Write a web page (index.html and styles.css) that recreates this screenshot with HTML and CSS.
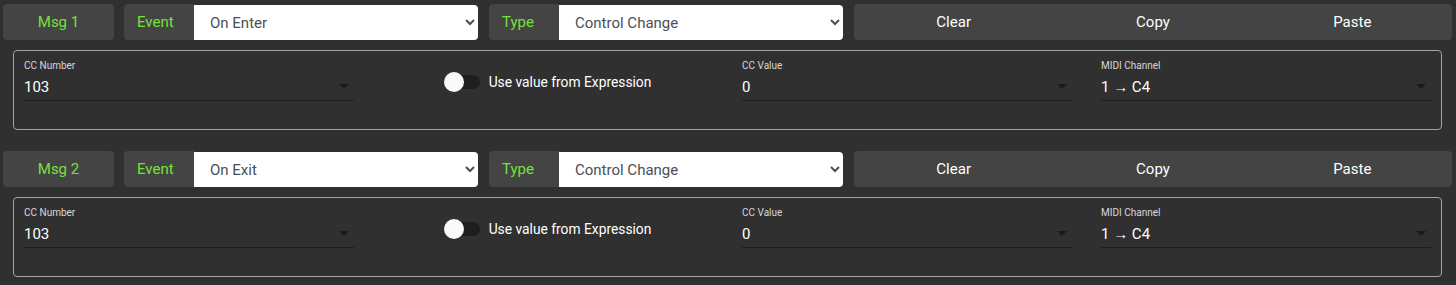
FILE: index.html
```html
<!DOCTYPE html>
<html lang="en">
<head>
    <meta charset="UTF-8">
    <meta name="viewport" content="width=device-width, initial-scale=1.0">
    <title>MIDI Messages</title>
    <link rel="stylesheet" href="styles.css">
</head>
<body>
    <div class="messages">
        <div class="msg-block">
            <div class="toolbar">
                <div class="msg-name">Msg 1</div>
                <div class="input-group">
                    <span class="group-label">Event</span>
                    <select class="group-select">
                        <option>On Enter</option>
                        <option>On Exit</option>
                    </select>
                </div>
                <div class="input-group">
                    <span class="group-label">Type</span>
                    <select class="group-select">
                        <option>Control Change</option>
                        <option>Program Change</option>
                    </select>
                </div>
                <div class="actions">
                    <button>Clear</button>
                    <button>Copy</button>
                    <button>Paste</button>
                </div>
            </div>
            <div class="panel">
                <div class="field">
                    <label>CC Number</label>
                    <div class="field-value">103 <span class="caret"></span></div>
                </div>
                <div class="switch-field">
                    <span class="switch"><span class="knob"></span></span>
                    <span>Use value from Expression</span>
                </div>
                <div class="field">
                    <label>CC Value</label>
                    <div class="field-value">0 <span class="caret"></span></div>
                </div>
                <div class="field">
                    <label>MIDI Channel</label>
                    <div class="field-value">1 → C4 <span class="caret"></span></div>
                </div>
            </div>
        </div>

        <div class="msg-block">
            <div class="toolbar">
                <div class="msg-name">Msg 2</div>
                <div class="input-group">
                    <span class="group-label">Event</span>
                    <select class="group-select">
                        <option>On Exit</option>
                        <option>On Enter</option>
                    </select>
                </div>
                <div class="input-group">
                    <span class="group-label">Type</span>
                    <select class="group-select">
                        <option>Control Change</option>
                        <option>Program Change</option>
                    </select>
                </div>
                <div class="actions">
                    <button>Clear</button>
                    <button>Copy</button>
                    <button>Paste</button>
                </div>
            </div>
            <div class="panel">
                <div class="field">
                    <label>CC Number</label>
                    <div class="field-value">103 <span class="caret"></span></div>
                </div>
                <div class="switch-field">
                    <span class="switch"><span class="knob"></span></span>
                    <span>Use value from Expression</span>
                </div>
                <div class="field">
                    <label>CC Value</label>
                    <div class="field-value">0 <span class="caret"></span></div>
                </div>
                <div class="field">
                    <label>MIDI Channel</label>
                    <div class="field-value">1 → C4 <span class="caret"></span></div>
                </div>
            </div>
        </div>
    </div>
</body>
</html>
```

FILE: styles.css
```css
body {
    margin: 0;
    font-family: Roboto, "Liberation Sans", Arial, sans-serif;
    background: #303030;
    color: white;
}
.messages {
    padding: 4px 4px 0 3px;
}
.msg-block {
    margin-bottom: 21px;
}
.toolbar {
    display: flex;
    height: 36px;
}
.msg-name {
    width: 111px;
    margin-right: 10px;
    background: #444;
    border-radius: 4px;
    color: #74e23a;
    font-size: 15px;
    display: flex;
    align-items: center;
    justify-content: center;
}
.input-group {
    display: flex;
    width: 354px;
    margin-right: 11px;
}
.group-label {
    width: 70px;
    box-sizing: border-box;
    padding-left: 13px;
    background: #444;
    border-radius: 4px 0 0 4px;
    color: #74e23a;
    font-size: 15px;
    display: flex;
    align-items: center;
}
.group-select {
    flex: 1;
    margin-top: 1px;
    height: 35px;
    border: none;
    border-radius: 0 4px 4px 0;
    background: white;
    color: #495057;
    font-family: inherit;
    font-size: 15px;
    padding: 0 8px 0 12px;
    outline: none;
}
.actions {
    flex: 1;
    display: flex;
    background: #444;
    border-radius: 4px;
}
.actions button {
    flex: 1;
    background: none;
    border: none;
    color: white;
    font-family: inherit;
    font-size: 15px;
    cursor: pointer;
}
.panel {
    margin: 10px 10px 0 10px;
    border: 1px solid #a3a3a3;
    border-radius: 4px;
    padding: 9px 10px 28px 10px;
    display: grid;
    grid-template-columns: repeat(4, 1fr);
    column-gap: 29px;
}
.field label {
    display: block;
    font-size: 10px;
    line-height: 12px;
    color: #d8d8d8;
}
.field-value {
    height: 29px;
    display: flex;
    align-items: center;
    justify-content: space-between;
    font-size: 15px;
    border-bottom: 1px solid #1e1e1e;
    box-sizing: border-box;
    padding: 1px 0 0 0;
}
.caret {
    width: 0;
    height: 0;
    margin-right: 5px;
    border-left: 5px solid transparent;
    border-right: 5px solid transparent;
    border-top: 5px solid #1a1a1a;
}
.switch-field {
    display: flex;
    align-items: center;
    justify-content: center;
    gap: 9px;
    font-size: 13.8px;
    padding-top: 2px;
}
.switch {
    position: relative;
    width: 34px;
    height: 14px;
    margin-left: 1px;
    background: #1e1e1e;
    border-radius: 7px;
}
.knob {
    position: absolute;
    left: -2px;
    top: -3px;
    width: 20px;
    height: 20px;
    border-radius: 50%;
    background: #fafafa;
}
```
